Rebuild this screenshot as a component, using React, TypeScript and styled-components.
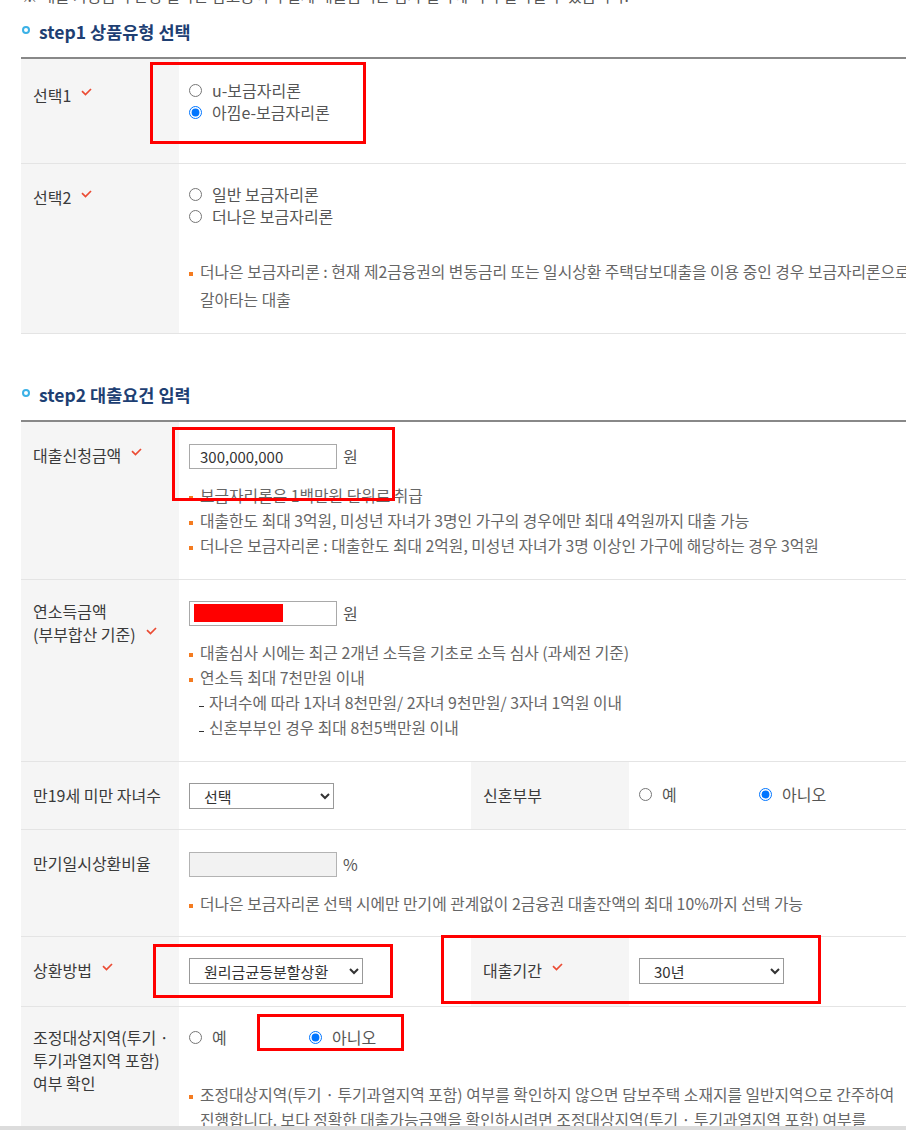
import React from 'react';
import styled, { createGlobalStyle } from 'styled-components';

const GlobalStyle = createGlobalStyle`
  html, body {
    margin: 0;
    padding: 0;
    background: #fff;
    overflow-x: hidden;
  }
  body {
    font-family: 'Noto Sans CJK KR', 'Noto Sans', sans-serif;
    color: #555;
    word-break: keep-all;
  }
`;

const Page = styled.div`
  width: 906px;
  padding: 0 0 60px 21px;
`;

const TopNotice = styled.p`
  margin: -15px 0 0 1px;
  font-size: 15.5px;
  line-height: 20px;
  color: #555;
  white-space: nowrap;
`;

const SectionTitle = styled.h3<{ $top: number }>`
  display: flex;
  align-items: center;
  gap: 9px;
  margin: ${p => p.$top}px 0 13px;
  font-size: 17.5px;
  font-weight: 700;
  line-height: 24px;
  color: #1e3f73;

  &::before {
    content: '';
    width: 4px;
    height: 4px;
    margin: -4px 0 0 1px;
    border: 2px solid #3bb1e6;
    border-radius: 50%;
  }
`;

const Table = styled.div`
  border-top: 2px solid #888;
`;

const Row = styled.div<{ $split?: boolean }>`
  position: relative;
  display: grid;
  grid-template-columns: ${p => (p.$split ? '158px 292px 158px 1fr' : '158px 1fr')};
  border-bottom: 1px solid #e4e4e4;
`;

const Label = styled.div<{ $pt?: number }>`
  background: #f5f5f5;
  padding: ${p => p.$pt ?? 22}px 4px 18px 12px;
  font-size: 16px;
  line-height: 23px;
  color: #3a3a3a;
`;

const Cell = styled.div<{ $pt?: number; $pb?: number }>`
  padding: ${p => p.$pt ?? 21}px 10px ${p => p.$pb ?? 20}px;
  font-size: 16px;
  line-height: 22px;
  color: #555;
`;

const Check = styled.svg`
  display: inline-block;
  position: relative;
  top: -6px;
  width: 11px;
  height: 8px;
  margin-left: 10px;
  vertical-align: middle;
`;

const RadioStack = styled.div`
  display: flex;
  flex-direction: column;
`;

const RadioLine = styled.div`
  display: flex;
  align-items: center;
`;

const RadioLabel = styled.label<{ $w?: number }>`
  display: inline-flex;
  align-items: center;
  gap: 10px;
  height: 22px;
  width: ${p => (p.$w ? `${p.$w}px` : 'auto')};

  input {
    width: 13px;
    height: 13px;
    margin: 0;
  }
`;

const FieldLine = styled.div`
  display: flex;
  align-items: center;
  gap: 6px;
  height: 26px;
`;

const InputWrap = styled.span`
  position: relative;
  display: inline-block;
  height: 25px;
`;

const TextInput = styled.input<{ $w: number }>`
  box-sizing: border-box;
  width: ${p => p.$w}px;
  height: 25px;
  padding: 0 10px;
  border: 1px solid #a9a9a9;
  border-radius: 0;
  background: #fff;
  font-family: 'Noto Sans CJK KR', sans-serif;
  font-size: 15px;
  color: #333;
  outline: none;

  &:disabled {
    background: #f2f2f2;
    border-color: #b3b3b3;
  }
`;

const Redaction = styled.span`
  position: absolute;
  left: 5px;
  top: 3px;
  width: 89px;
  height: 18px;
  background: #ff0000;
`;

const Unit = styled.span`
  font-size: 16px;
  color: #555;
`;

const Select = styled.select<{ $w: number }>`
  box-sizing: border-box;
  width: ${p => p.$w}px;
  height: 26px;
  padding: 0 6px 0 10px;
  border: 1px solid #999;
  border-radius: 0;
  background: #fff;
  font-family: 'Noto Sans CJK KR', sans-serif;
  font-size: 15px;
  color: #333;
`;

const Notes = styled.ul<{ $mt: number; $lh?: number }>`
  list-style: none;
  margin: ${p => p.$mt}px 0 0;
  padding: 0;
  font-size: 15.8px;
  line-height: ${p => p.$lh ?? 25}px;
  color: #666;
`;

const Note = styled.li<{ $dash?: boolean; $lh?: number }>`
  position: relative;
  padding-left: ${p => (p.$dash ? 20 : 11)}px;

  &::before {
    content: '';
    position: absolute;
    left: ${p => (p.$dash ? 10 : 0)}px;
    top: ${p => (p.$dash ? (p.$lh ?? 25) / 2 + 3 : (p.$lh ?? 25) / 2)}px;
    width: ${p => (p.$dash ? 5 : 4)}px;
    height: ${p => (p.$dash ? 1 : 4)}px;
    background: ${p => (p.$dash ? '#333' : '#f47b20')};
  }
`;

const Annotation = styled.div<{ $x: number; $y: number; $w: number; $h: number }>`
  position: absolute;
  left: ${p => p.$x}px;
  top: ${p => p.$y}px;
  width: ${p => p.$w}px;
  height: ${p => p.$h}px;
  box-sizing: border-box;
  border: 3px solid #ff0000;
  pointer-events: none;
`;

const ScrollStrip = styled.div`
  position: fixed;
  left: 0;
  right: 0;
  bottom: 0;
  height: 4px;
  background: #dcdcdc;
`;

const Required = () => (
  <Check viewBox='0 0 11 8'>
    <polyline points='1,3.2 4.5,6.6 10,1' fill='none' stroke='#eb4b33' strokeWidth='1.7' />
  </Check>
);

const App: React.FC = () => {
  return (
    <Page>
      <GlobalStyle />
      <TopNotice>
        ※ 대출 가능금액 산정 결과는 참고용이며 실제 대출금액은 심사 결과에 따라 달라질 수 있습니다.
      </TopNotice>

      <SectionTitle $top={15}>step1 상품유형 선택</SectionTitle>
      <Table>
        <Row>
          <Label $pt={25}>
            선택1
            <Required />
          </Label>
          <Cell $pt={20} $pb={40}>
            <RadioStack>
              <RadioLabel>
                <input type='radio' name='type1' />
                u-보금자리론
              </RadioLabel>
              <RadioLabel>
                <input type='radio' name='type1' defaultChecked />
                아낌e-보금자리론
              </RadioLabel>
            </RadioStack>
          </Cell>
          <Annotation $x={129} $y={3} $w={216} $h={82} />
        </Row>
        <Row>
          <Label>
            선택2
            <Required />
          </Label>
          <Cell $pt={19} $pb={19}>
            <RadioStack>
              <RadioLabel>
                <input type='radio' name='type2' />
                일반 보금자리론
              </RadioLabel>
              <RadioLabel>
                <input type='radio' name='type2' />
                더나은 보금자리론
              </RadioLabel>
            </RadioStack>
            <Notes $mt={31} $lh={28}>
              <Note $lh={28}>
                더나은 보금자리론 : 현재 제2금융권의 변동금리 또는 일시상환 주택담보대출을 이용 중인 경우
                보금자리론으로 갈아타는 대출
              </Note>
            </Notes>
          </Cell>
        </Row>
      </Table>

      <SectionTitle $top={49}>step2 대출요건 입력</SectionTitle>
      <Table>
        <Row>
          <Label>
            대출신청금액
            <Required />
          </Label>
          <Cell $pb={21}>
            <FieldLine>
              <TextInput $w={148} type='text' defaultValue='300,000,000' />
              <Unit>원</Unit>
            </FieldLine>
            <Notes $mt={14}>
              <Note>보금자리론은 1백만원 단위로 취급</Note>
              <Note>대출한도 최대 3억원, 미성년 자녀가 3명인 가구의 경우에만 최대 4억원까지 대출 가능</Note>
              <Note>더나은 보금자리론 : 대출한도 최대 2억원, 미성년 자녀가 3명 이상인 가구에 해당하는 경우 3억원</Note>
            </Notes>
          </Cell>
          <Annotation $x={151} $y={5} $w={223} $h={74} />
        </Row>
        <Row>
          <Label $pt={20}>
            연소득금액
            <br />
            (부부합산 기준)
            <Required />
          </Label>
          <Cell $pt={20} $pb={21}>
            <FieldLine>
              <InputWrap>
                <TextInput $w={148} type='text' />
                <Redaction />
              </InputWrap>
              <Unit>원</Unit>
            </FieldLine>
            <Notes $mt={14}>
              <Note>대출심사 시에는 최근 2개년 소득을 기초로 소득 심사 (과세전 기준)</Note>
              <Note>연소득 최대 7천만원 이내</Note>
              <Note $dash>자녀수에 따라 1자녀 8천만원/ 2자녀 9천만원/ 3자녀 1억원 이내</Note>
              <Note $dash>신혼부부인 경우 최대 8천5백만원 이내</Note>
            </Notes>
          </Cell>
        </Row>
        <Row $split>
          <Label>만19세 미만 자녀수</Label>
          <Cell>
            <Select $w={145} defaultValue=''>
              <option value=''>선택</option>
              <option value='1'>1명</option>
              <option value='2'>2명</option>
              <option value='3'>3명 이상</option>
            </Select>
          </Cell>
          <Label>신혼부부</Label>
          <Cell $pt={21}>
            <RadioLine>
              <RadioLabel $w={120}>
                <input type='radio' name='newlywed' />
                예
              </RadioLabel>
              <RadioLabel>
                <input type='radio' name='newlywed' defaultChecked />
                아니오
              </RadioLabel>
            </RadioLine>
          </Cell>
        </Row>
        <Row>
          <Label>만기일시상환비율</Label>
          <Cell>
            <FieldLine>
              <TextInput $w={148} type='text' disabled />
              <Unit>%</Unit>
            </FieldLine>
            <Notes $mt={14}>
              <Note>더나은 보금자리론 선택 시에만 만기에 관계없이 2금융권 대출잔액의 최대 10%까지 선택 가능</Note>
            </Notes>
          </Cell>
        </Row>
        <Row $split>
          <Label>
            상환방법
            <Required />
          </Label>
          <Cell $pb={22}>
            <Select $w={174} defaultValue='equal'>
              <option value='equal'>원리금균등분할상환</option>
              <option value='principal'>원금균등분할상환</option>
              <option value='increase'>체증식분할상환</option>
            </Select>
          </Cell>
          <Label>
            대출기간
            <Required />
          </Label>
          <Cell $pb={22}>
            <Select $w={145} defaultValue='30'>
              <option value='10'>10년</option>
              <option value='15'>15년</option>
              <option value='20'>20년</option>
              <option value='30'>30년</option>
              <option value='40'>40년</option>
              <option value='50'>50년</option>
            </Select>
          </Cell>
          <Annotation $x={132} $y={7} $w={240} $h={54} />
          <Annotation $x={420} $y={-2} $w={380} $h={69} />
        </Row>
        <Row>
          <Label $pt={19}>조정대상지역(투기 · 투기과열지역 포함) 여부 확인</Label>
          <Cell $pt={19}>
            <RadioLine>
              <RadioLabel $w={120}>
                <input type='radio' name='regulated' />
                예
              </RadioLabel>
              <RadioLabel>
                <input type='radio' name='regulated' defaultChecked />
                아니오
              </RadioLabel>
            </RadioLine>
            <Notes $mt={34}>
              <Note>
                조정대상지역(투기 · 투기과열지역 포함) 여부를 확인하지 않으면 담보주택 소재지를 일반지역으로 간주하여
                진행합니다. 보다 정확한 대출가능금액을 확인하시려면 조정대상지역(투기 · 투기과열지역 포함) 여부를
                확인하여 주시기 바랍니다.
              </Note>
            </Notes>
          </Cell>
          <Annotation $x={236} $y={7} $w={147} $h={37} />
        </Row>
      </Table>
      <ScrollStrip />
    </Page>
  );
};

export default App;
